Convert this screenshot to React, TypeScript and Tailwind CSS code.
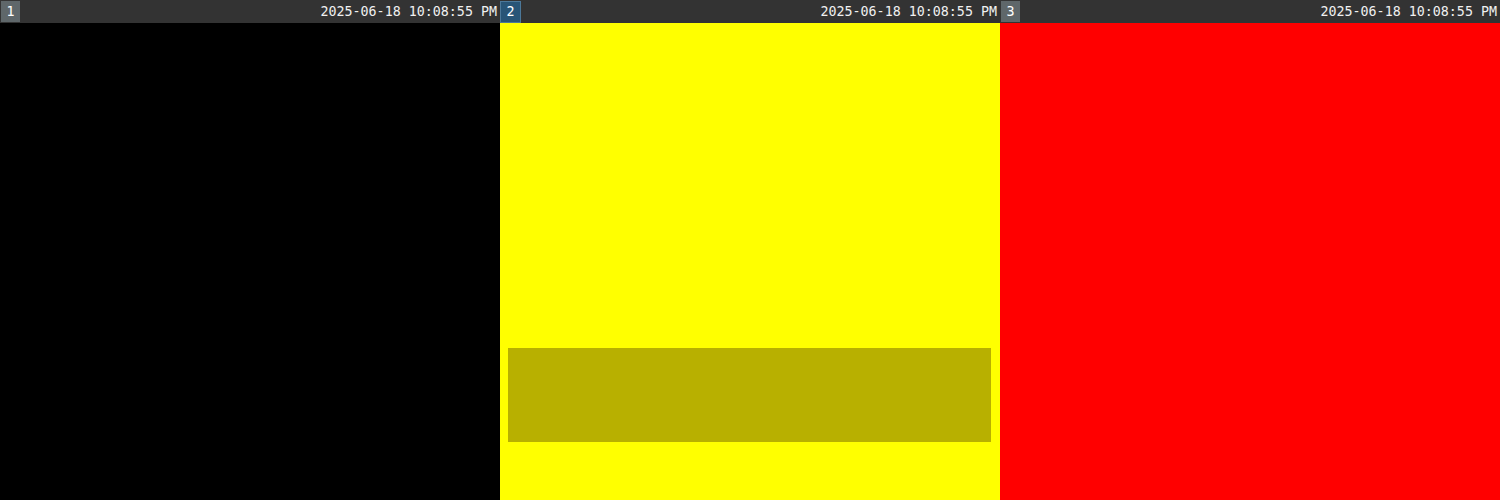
import React from "react";

const panels = [
  { n: "1", bg: "bg-black", active: false },
  { n: "2", bg: "bg-[#ffff00]", active: true },
  { n: "3", bg: "bg-[#ff0000]", active: false },
];

export default function App() {
  return (
    <div className="flex w-[1500px] h-[500px] overflow-hidden" style={{ fontFamily: '"DejaVu Sans Mono", monospace' }}>
      {panels.map((p) => (
        <div key={p.n} className="flex flex-col w-[500px] h-full">
          <div className="flex items-center h-[23px] bg-[#333333] text-[13.33px] text-[#f0f0f0]">
            <div
              className={
                p.active
                  ? "flex items-center justify-center w-[21px] h-[22px] mt-px bg-[#285577] border border-[#4c7899] text-white"
                  : "flex items-center justify-center w-[19px] h-[21px] ml-px bg-[#5f676a] text-white"
              }
            >
              {p.n}
            </div>
            <div className="flex-1" />
            <div className="pr-[3px] leading-none">2025-06-18 10:08:55 PM</div>
          </div>
          <div className={`flex-1 ${p.bg} flex flex-col justify-end`}>
            {p.active && <div className="ml-[8px] mr-[9px] mb-[58px] h-[94px] bg-[#b8b000]" />}
          </div>
        </div>
      ))}
    </div>
  );
}
